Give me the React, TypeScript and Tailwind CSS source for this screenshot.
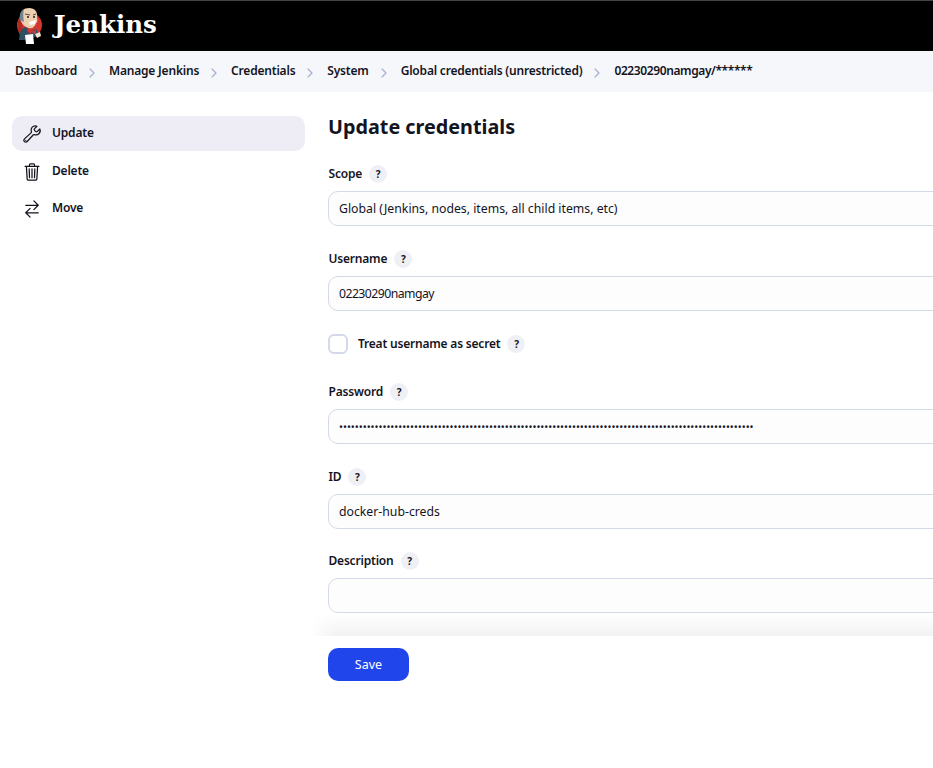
import { ChevronRight } from "lucide-react";
import { IoBuildOutline, IoTrashOutline, IoSwapHorizontalOutline } from "react-icons/io5";

const crumbs = [
  "Dashboard",
  "Manage Jenkins",
  "Credentials",
  "System",
  "Global credentials (unrestricted)",
  "02230290namgay/******",
];

function Logo() {
  return (
    <svg width="29" height="38" viewBox="0 0 29 38" className="shrink-0">
      <circle cx="14.5" cy="18" r="12.5" fill="#d33833" />
      <path d="M6 8 C2 13 1 22 5 28 L8 26 Z" fill="#b02a25" />
      <path d="M5 11 C5 4 9 1 14 1 C20 1 23 5 22 11 C23 13 22 16 21 16 C20 20 17 22 14 21 C9 20 6 16 5 11 Z" fill="#ecd0b0" />
      <path d="M5 13 C4 7 6 4 9 2 C8 6 8 10 9 15 Z" fill="#6d8494" />
      <path d="M14 15 L21 13 L20 17 L15 18 Z" fill="#fff" />
      <path d="M10 7 L15 8 M18 8 L21 7" stroke="#5a4a3f" strokeWidth="1" />
      <circle cx="13" cy="10" r="1" fill="#231f20" />
      <circle cx="19" cy="10" r="1" fill="#231f20" />
      <path d="M4 33 L5 26 C6 22 9 20 11 20 L16 24 L21 22 L24 27 L20 30 L10 33 Z" fill="#335061" />
      <path d="M12 21 L17 24 L16 27 L13 25 Z" fill="#d33833" />
      <path d="M21 23 L17 24 L18 27 L21 26 Z" fill="#d33833" />
      <path d="M10 28 L18 27 L19 37 L11 37 Z" fill="#fff" />
      <path d="M20 27 L25 25 L26 29 L22 31 Z" fill="#f3e3d0" />
    </svg>
  );
}

function Help() {
  return (
    <span className="ml-[7px] flex h-[18px] w-[18px] items-center justify-center rounded-full bg-[#eef0f5] text-[10px] font-bold text-[#14141f]">
      ?
    </span>
  );
}

function Field({
  label,
  value,
  dots,
  tight,
  narrow,
}: {
  label: string;
  value?: string;
  dots?: boolean;
  tight?: boolean;
  narrow?: boolean;
}) {
  return (
    <div className={`relative h-[35px] ${tight ? "mb-[49px]" : "mb-[50px]"} last:mb-0`}>
      <div className="absolute -top-[26px] left-[0.5px] flex h-[18px] items-center text-[12px] font-semibold tracking-[-0.2px]">
        {label}
        <Help />
      </div>
      <div
        className={`flex h-[35px] w-[700px] items-center rounded-[10px] border border-[#d3d9e8] bg-[#fdfdfe] pl-[10px] pt-[2px] text-[#14141f] ${
          dots ? "text-[10.5px]" : narrow ? "text-[12.25px] tracking-[-0.55px]" : "text-[12.25px]"
        }`}
      >
        {dots ? "•".repeat(105) : value}
      </div>
    </div>
  );
}

export default function App() {
  return (
    <div className="h-[768px] w-[933px] overflow-hidden bg-white font-['Noto_Sans',sans-serif] text-[#14141f]">
      <header className="flex h-[51px] items-center border-t border-[#444] bg-black pl-[15px]">
        <Logo />
        <span className="-mt-[1px] ml-[10px] font-['DejaVu_Serif',serif] text-[24.5px] font-bold text-white">
          Jenkins
        </span>
      </header>
      <nav className="flex h-[41px] items-center bg-[#f6f7fa] pb-[1px] pl-[15px] text-[12px] font-semibold tracking-[-0.2px]">
        {crumbs.map((c, i) => (
          <div key={c} className="flex items-center">
            <span className={i === 5 ? "tracking-[-0.4px]" : ""}>{c}</span>
            {i < crumbs.length - 1 && (
              <ChevronRight size={16} strokeWidth={1.75} className="ml-[7px] mr-[9px] mt-[3px] text-[#a3b0cf]" />
            )}
          </div>
        ))}
      </nav>
      <div className="flex">
        <aside className="ml-[12px] mt-[24px] w-[293px] shrink-0 text-[12px] font-semibold tracking-[-0.2px]">
          <div className="flex h-[35px] items-center rounded-[10px] bg-[#eeedf6] pl-[10px]">
            <IoBuildOutline size={20} />
            <span className="-mt-[2px] ml-[10px]">Update</span>
          </div>
          <div className="mt-[2px] flex h-[37px] items-center pl-[10px]">
            <IoTrashOutline size={20} />
            <span className="-mt-[2px] ml-[10px]">Delete</span>
          </div>
          <div className="flex h-[37px] items-center pl-[10px]">
            <IoSwapHorizontalOutline size={20} />
            <span className="-mt-[2px] ml-[10px]">Move</span>
          </div>
        </aside>
        <main className="ml-[23px] flex-1">
          <h1 className="mt-[20px] h-[31px] text-[19.8px] font-bold leading-[30px]">Update credentials</h1>
          <div className="mt-[48px]">
            <Field label="Scope" value="Global (Jenkins, nodes, items, all child items, etc)" />
            <Field label="Username" value="02230290namgay" narrow />
            <div className="-mt-[27px] mb-[55px] flex h-[20px] items-center text-[12px] font-semibold tracking-[-0.2px]">
              <span className="h-[20px] w-[20px] rounded-[6px] border-2 border-[#d3d9e8] bg-white" />
              <span className="ml-[10px]">Treat username as secret</span>
              <Help />
            </div>
            <Field label="Password" dots />
            <Field label="ID" value="docker-hub-creds" tight />
            <Field label="Description" value="" tight />
          </div>
          <div className="relative -ml-[18px] h-[23px] bg-gradient-to-b from-white to-[#f3f3f4]">
            <div className="absolute inset-y-0 left-0 w-[24px] bg-gradient-to-r from-white to-transparent" />
          </div>
          <button className="mt-[12px] h-[33px] w-[81px] rounded-[10px] bg-[#2046eb] pt-[1px] text-[12.5px] text-white">
            Save
          </button>
        </main>
      </div>
    </div>
  );
}
